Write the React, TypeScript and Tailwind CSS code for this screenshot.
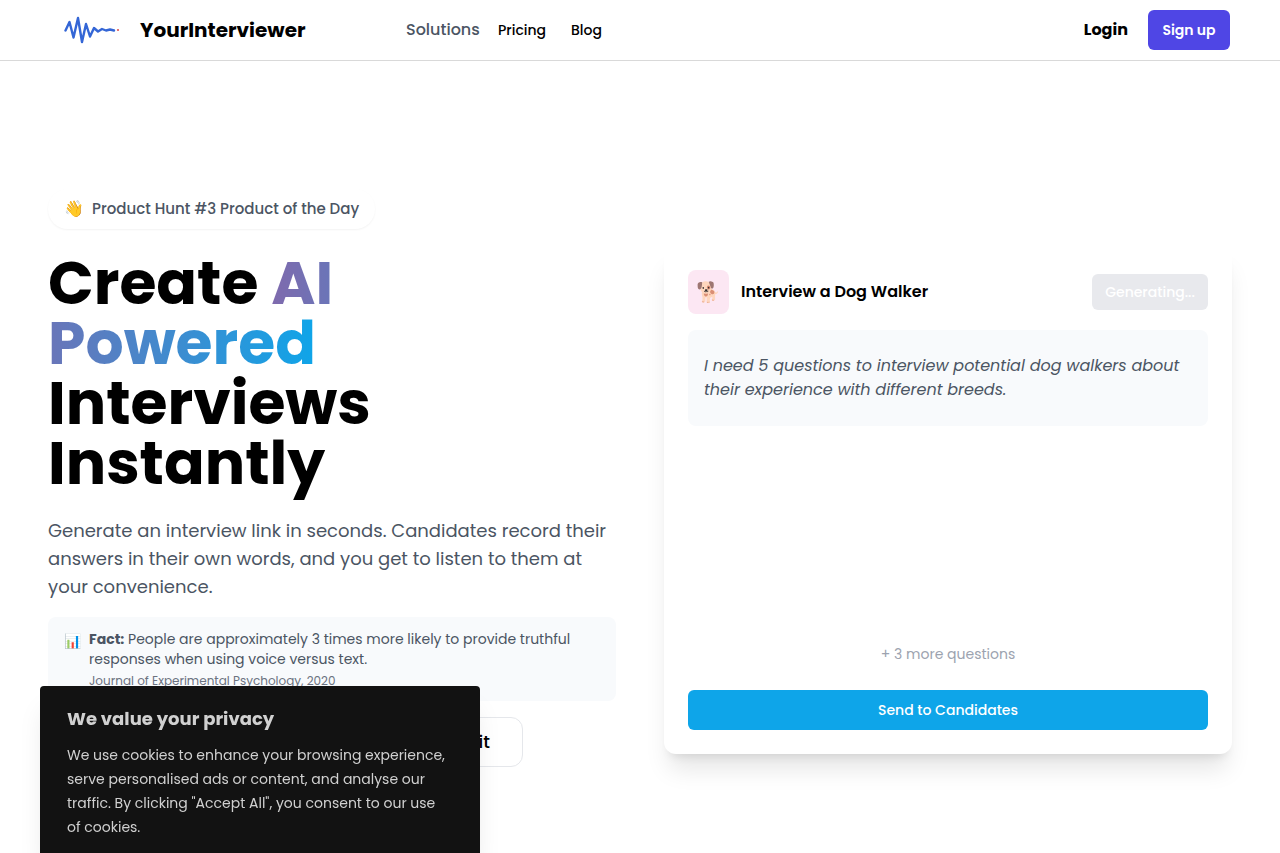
function Logo() {
  return (
    <svg width="56" height="30" viewBox="0 0 56 30" fill="none" aria-hidden="true">
      <path
        d="M1.5 15.5L5.5 7L9.5 22.5L14 3L18 27L22 9L26 21.5L30 13L34 16.5L38 14L42 15.5L46 14.5L50 15.5"
        stroke="#3466d6"
        strokeWidth="2.4"
        strokeLinejoin="round"
        strokeLinecap="round"
      />
      <circle cx="54" cy="15" r="1.1" fill="#e05252" />
    </svg>
  );
}

function Header() {
  return (
    <header className="flex items-center justify-between h-[61px] pl-16 pr-[50px] border-b border-[#d9d9d9]">
      <div className="flex items-center">
        <a href="#" className="flex items-center gap-5 w-[342px]">
          <Logo />
          <span className="text-xl font-bold">YourInterviewer</span>
        </a>
        <nav className="flex items-center text-sm font-medium">
          <a href="#" className="text-base text-[#4b5563] w-[92px]">
            Solutions
          </a>
          <a href="#" className="w-[73px]">
            Pricing
          </a>
          <a href="#">Blog</a>
        </nav>
      </div>
      <div className="flex items-center gap-5">
        <a href="#" className="font-bold">
          Login
        </a>
        <button className="w-[82px] h-10 rounded-md bg-[#4f46e5] text-white text-sm font-semibold">
          Sign up
        </button>
      </div>
    </header>
  );
}

function Hero() {
  return (
    <div className="flex flex-col items-start pb-11">
      <div className="flex items-center gap-2 h-10 px-4 rounded-full shadow-[0_1px_2px_rgba(0,0,0,0.05)] text-[15px] font-medium text-[#4b5563]">
        <span className="text-base">👋</span>
        <span>Product Hunt #3 Product of the Day</span>
      </div>
      <h1 className="mt-6 text-[60px] leading-[60px] font-bold">
        Create{" "}
        <span className="bg-[linear-gradient(90deg,#7f6aad,#0ea5e9)] bg-clip-text text-transparent">
          AI
          <br />
          Powered
        </span>
        <br />
        Interviews
        <br />
        Instantly
      </h1>
      <p className="mt-6 text-lg leading-7 text-[#4b5563]">
        Generate an interview link in seconds. Candidates record their
        <br />
        answers in their own words, and you get to listen to them at
        <br />
        your convenience.
      </p>
      <div className="flex gap-2 mt-4 px-4 py-3 w-full rounded-lg bg-slate-50 text-sm text-[#4b5563]">
        <span className="leading-6">📊</span>
        <div>
          <p>
            <strong>Fact:</strong> People are approximately 3 times more likely to provide truthful
            <br />
            responses when using voice versus text.
          </p>
          <p className="mt-1 text-xs text-[#6b7280]">Journal of Experimental Psychology, 2020</p>
        </div>
      </div>
      <div className="flex gap-4 mt-4 text-lg font-medium">
        <button className="w-[220px] h-[50px] rounded-xl bg-[#0ea5e9] text-white">Get started</button>
        <button className="w-[239px] h-[50px] px-8 rounded-xl border border-[#e5e7eb] text-right">
          Try it
        </button>
      </div>
    </div>
  );
}

function InterviewCard() {
  return (
    <div className="flex flex-col h-[508px] p-6 rounded-xl bg-white shadow-xl">
      <div className="flex items-center">
        <span className="flex items-center justify-center w-[41px] h-11 rounded-lg bg-[#fce7f3] text-xl">
          <span className="opacity-80">🐕</span>
        </span>
        <h2 className="ml-3 font-semibold">Interview a Dog Walker</h2>
        <button
          disabled
          className="ml-auto w-[116px] h-9 rounded-md bg-[#e8e9ed] text-white text-sm font-medium"
        >
          Generating...
        </button>
      </div>
      <p className="mt-4 px-4 py-6 rounded-lg bg-slate-50 text-[#4b5563] italic">
        I need 5 questions to interview potential dog walkers about
        <br />
        their experience with different breeds.
      </p>
      <p className="mt-auto mb-[26px] text-center text-sm text-[#9ca3af]">+ 3 more questions</p>
      <button className="h-10 rounded-md bg-[#0ea5e9] text-white text-sm font-medium">
        Send to Candidates
      </button>
    </div>
  );
}

function CookieBanner() {
  return (
    <div className="fixed left-10 bottom-0 w-[440px] px-[27px] pt-5 pb-[14px] rounded-t bg-[#121212] text-[#d0d0d0] shadow-xl">
      <h2 className="text-lg leading-[25px] font-bold">We value your privacy</h2>
      <p className="mt-3 text-sm leading-6">
        We use cookies to enhance your browsing experience,
        <br />
        serve personalised ads or content, and analyse our
        <br />
        traffic. By clicking "Accept All", you consent to our use
        <br />
        of cookies.
      </p>
    </div>
  );
}

export default function App() {
  return (
    <div className="font-['Poppins','Inter',sans-serif] text-black">
      <Header />
      <main className="grid grid-cols-2 gap-12 items-center px-12 pt-32">
        <Hero />
        <InterviewCard />
      </main>
      <CookieBanner />
    </div>
  );
}
